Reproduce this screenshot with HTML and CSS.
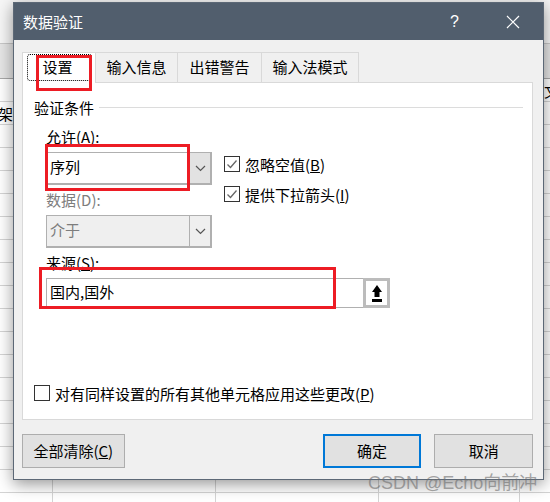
FILE: index.html
```html
<!DOCTYPE html>
<html lang="zh">
<head>
<meta charset="utf-8">
<title>数据验证</title>
<link rel="stylesheet" href="styles.css">
</head>
<body>
<div class="sheet">
  <div class="sheet-top"></div>
  <div class="sheet-head"></div>
  <span class="sheet-char sheet-left">架</span>
  <span class="sheet-char sheet-right">文</span>
</div>
<div class="dialog">
  <div class="titlebar">
    <span class="title">数据验证</span>
    <span class="help">?</span>
    <svg class="close" width="14" height="14" viewBox="0 0 14 14"><path d="M1 1L13 13M13 1L1 13" stroke="#fff" stroke-width="1.2" fill="none"/></svg>
  </div>
  <div class="body">
    <div class="tabs">
      <div class="tab tab-active"><span class="focus">设置</span></div>
      <div class="tab">输入信息</div>
      <div class="tab">出错警告</div>
      <div class="tab">输入法模式</div>
    </div>
    <div class="panel">
      <div class="group-title"><span>验证条件</span><i class="rule"></i></div>
      <div class="label label-first">允许(A):</div>
      <div class="row">
        <div class="combo">
          <div class="combo-value">序列</div>
          <div class="combo-btn"><svg width="11" height="7" viewBox="0 0 11 7"><path d="M1 1L5.500 5.500L10 1" stroke="#555" stroke-width="1.200" fill="none"/></svg></div>
        </div>
        <div class="checks">
          <label class="check"><span class="box"><svg width="14" height="14" viewBox="0 0 14 14"><path d="M2.500 7.500L5.500 10.500L11.500 3.500" stroke="#666" stroke-width="1.300" fill="none"/></svg></span>忽略空值(<u>B</u>)</label>
          <label class="check"><span class="box"><svg width="14" height="14" viewBox="0 0 14 14"><path d="M2.500 7.500L5.500 10.500L11.500 3.500" stroke="#666" stroke-width="1.300" fill="none"/></svg></span>提供下拉箭头(<u>I</u>)</label>
        </div>
      </div>
      <div class="label label-dis">数据(D):</div>
      <div class="combo combo-dis">
        <div class="combo-value">介于</div>
        <div class="combo-btn"><svg width="11" height="7" viewBox="0 0 11 7"><path d="M1 1L5.500 5.500L10 1" stroke="#555" stroke-width="1.200" fill="none"/></svg></div>
      </div>
      <div class="label label-src">来源(<u>S</u>):</div>
      <div class="source">
        <div class="source-value">国内,国外</div>
        <div class="pick"><svg width="10" height="17" viewBox="0 0 10 17"><path d="M5 0L10 7H7.500V12H2.500V7H0Z M0 14H10V17H0Z" fill="#000"/></svg></div>
      </div>
      <label class="check check-all"><span class="box"></span>对有同样设置的所有其他单元格应用这些更改(<u>P</u>)</label>
    </div>
    <div class="footer">
      <button class="btn btn-clear">全部清除(<u>C</u>)</button>
      <button class="btn btn-ok">确定</button>
      <button class="btn btn-cancel">取消</button>
    </div>
  </div>
</div>
<div class="mark mark-tab"></div>
<div class="mark mark-allow"></div>
<div class="mark mark-source"></div>
<div class="watermark">CSDN @Echo向前冲</div>
</body>
</html>
```
FILE: styles.css
```css
* { box-sizing: border-box; }
html, body { margin: 0; padding: 0; }
body {
  width: 550px;
  height: 502px;
  overflow: hidden;
  position: relative;
  background: #fff;
  font-family: "Noto Sans CJK SC", "Liberation Sans", sans-serif;
  font-size: 15px;
  color: #000;
}
.sheet {
  position: absolute;
  inset: 0;
  overflow: hidden;
  background-color: #fff;
  background-image:
    linear-gradient(#d4d4d4 1px, transparent 1px),
    linear-gradient(#d4d4d4, #d4d4d4),
    linear-gradient(#d4d4d4, #d4d4d4),
    linear-gradient(#d4d4d4, #d4d4d4),
    linear-gradient(#d4d4d4, #d4d4d4);
  background-repeat: repeat-y, no-repeat, no-repeat, no-repeat, no-repeat;
  background-size: 100% 23px, 1px 100%, 1px 100%, 1px 100%, 1px 100%;
  background-position: 0 9px, 52px 0, 215px 0, 378px 0, 519px 0;
}
.sheet-top {
  position: absolute;
  left: 0;
  top: 0;
  width: 100%;
  height: 43px;
  background: #f6f6f6;
}
.sheet-head {
  position: absolute;
  left: 0;
  top: 43px;
  width: 100%;
  height: 36px;
  background: #e6e6e6;
  border-top: 1px solid #c8c8c8;
  border-bottom: 1px solid #a8a8a8;
}
.sheet-char { position: absolute; font-size: 15px; line-height: 20px; }
.sheet-left { left: -2px; top: 104px; }
.sheet-right { left: 544px; top: 81px; }
.dialog {
  position: absolute;
  left: 13px;
  top: 2px;
  width: 531px;
  height: 478px;
  background: #f0f0f0;
  border: 1px solid #5c6876;
  box-shadow: 0 4px 15px rgba(0, 0, 0, .42);
  display: flex;
  flex-direction: column;
}
.titlebar {
  height: 37px;
  flex: none;
  background: #515e6d;
  color: #fff;
  display: flex;
  align-items: center;
  padding: 0 23px 0 9px;
}
.title { flex: 1; }
.help { font-size: 16px; margin-right: 47px; font-family: "Liberation Sans", sans-serif; }
.close { display: block; }
.body { flex: 1; padding: 12px 10px 0 8px; display: flex; flex-direction: column; }
.tabs { display: flex; height: 31px; position: relative; }
.tab {
  height: 31px;
  width: 82px;
  display: flex;
  align-items: center;
  justify-content: center;
  border: 1px solid #d9d9d9;
  border-left: 0;
  background: #f0f0f0;
  white-space: nowrap;
  padding-bottom: 3px;
}
.tab:nth-child(3) { width: 84px; }
.tab:nth-child(4) { width: 97px; }
.tab-active {
  width: 74px;
  background: #fff;
  border-left: 1px solid #d9d9d9;
  border-bottom: 0;
  padding: 1px 3px 2px 4px;
}
.focus {
  display: flex;
  width: 100%;
  height: 100%;
  align-items: center;
  justify-content: center;
  border: 1px dotted #000;
  border-radius: 3px;
  padding: 0 4px 3px 0;
}
.panel {
  height: 338px;
  width: 511px;
  background: #fff;
  border: 1px solid #d9d9d9;
  margin-top: -1px;
  padding: 13px 0 0 11px;
  display: flex;
  flex-direction: column;
}
.group-title { display: flex; align-items: center; height: 22px; margin-right: 9px; }
.rule { flex: 1; height: 1px; background: #dcdcdc; margin-left: 5px; }
.label { height: 22px; line-height: 22px; margin: 4px 0 4px 12px; white-space: nowrap; }
.label-first { margin-top: 8px; }
.label-dis { color: #7d7d7d; }
.row { display: flex; align-items: flex-start; height: 33px; flex: none; margin-left: 12px; }
.combo {
  width: 166px;
  height: 33px;
  flex: none;
  border: 2px solid #b0b0b0;
  border-width: 1px 2px 2px 1px;
  background: #fff;
  display: flex;
  align-items: center;
  justify-content: space-between;
}
.combo-dis { margin-left: 12px; background: #efefef; }
.combo-value { padding: 0 0 3px 3px; }
.combo-dis .combo-value { color: #7d7d7d; }
.combo-btn {
  width: 21px;
  height: 100%;
  background: #e2e2e2;
  border-left: 1px solid #b0b0b0;
  display: flex;
  align-items: center;
  justify-content: center;
}
.combo-dis .combo-btn { background: #efefef; }
.checks { margin-left: 12px; display: flex; flex-direction: column; gap: 6px; }
.check { display: flex; align-items: center; height: 24px; white-space: nowrap; }
.box {
  width: 16px;
  height: 16px;
  border: 1px solid #333;
  background: #fff;
  margin-right: 5px;
  flex: none;
  display: flex;
  align-items: center;
  justify-content: center;
}
.source {
  margin-left: 12px;
  width: 344px;
  height: 30px;
  flex: none;
  border: 1px solid #b0b0b0;
  border-right: 0;
  display: flex;
  align-items: center;
  justify-content: space-between;
}
.source-value { padding: 0 0 3px 3px; }
.pick {
  width: 27px;
  height: 30px;
  border: 3px solid #bcbcbc;
  background: #fff;
  display: flex;
  align-items: center;
  justify-content: center;
}
.check-all { margin-top: 73px; }
.footer { display: flex; margin-top: 14px; }
.btn {
  height: 34px;
  font: inherit;
  color: #000;
  background: #e1e1e1;
  border: 1px solid #adadad;
  padding: 0 0 2px;
}
.btn-clear { width: 103px; margin-right: 198px; }
.btn-ok { width: 99px; border: 2px solid #0078d7; margin-right: 13px; }
.btn-cancel { width: 99px; }
.mark { position: absolute; border: 3px solid #ed1c24; }
.mark-tab { left: 36px; top: 55px; width: 56px; height: 36px; }
.mark-allow { left: 45px; top: 144px; width: 145px; height: 47px; }
.mark-source { left: 39px; top: 267px; width: 297px; height: 42px; }
.watermark {
  position: absolute;
  left: 368px;
  top: 472px;
  font-family: "Liberation Sans", "Noto Sans CJK SC", sans-serif;
  font-size: 18px;
  line-height: 22px;
  color: rgba(110, 110, 110, .6);
  white-space: nowrap;
}
```
